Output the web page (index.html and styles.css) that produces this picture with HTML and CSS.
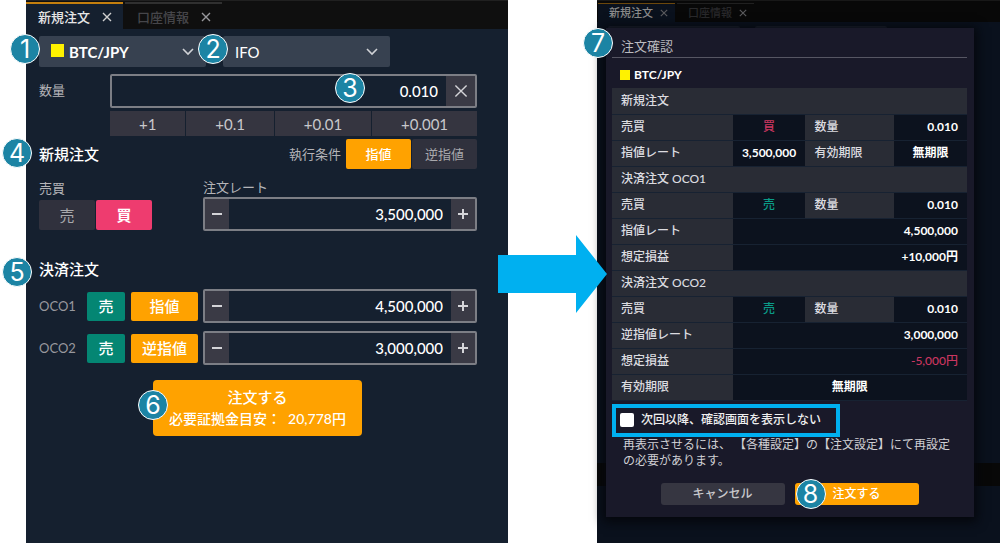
FILE: index.html
```html
<!DOCTYPE html>
<html lang="ja">
<head>
    <meta charset="UTF-8" />
    <meta name="viewport" content="width=device-width, initial-scale=1" />
    <title>IFO注文</title>
    <link rel="stylesheet" href="styles.css">
</head>
<body>
    <!-- ORDER ENTRY -->
    <main class="panel">
        <nav class="tabs">
            <div class="tab active"><button type="button">新規注文</button><button type="button" aria-label="新規注文を閉じる"><svg class="close" viewBox="0 0 10 10"><path d="M1 1l8 8M9 1l-8 8" /></svg></button></div>
            <div class="tab"><button type="button">口座情報</button><button type="button" aria-label="口座情報を閉じる"><svg class="close" viewBox="0 0 10 10"><path d="M1 1l8 8M9 1l-8 8" /></svg></button></div>
        </nav>

        <form class="order">
            <div class="selects">
                <div class="select has-coin">
                    <span class="badge badge-left">1</span>
                    <span class="coin"></span>
                    <select aria-label="銘柄"><option>BTC/JPY</option></select>
                    <svg class="chevron" viewBox="0 0 12 8"><path d="M1 1l5 5 5-5" /></svg>
                </div>
                <div class="select">
                    <span class="badge badge-between">2</span>
                    <select aria-label="注文種別"><option>IFO</option></select>
                    <svg class="chevron" viewBox="0 0 12 8"><path d="M1 1l5 5 5-5" /></svg>
                </div>
            </div>

            <div class="quantity">
                <label for="qty">数量</label>
                <div class="quantity-fields">
                    <div class="field field-qty">
                        <span class="badge badge-qty">3</span>
                        <input type="text" id="qty" value="0.010" />
                        <button type="button" class="clear" aria-label="クリア"><svg class="close" viewBox="0 0 10 10"><path d="M1 1l8 8M9 1l-8 8" /></svg></button>
                    </div>
                    <div class="quick">
                        <button type="button">+1</button>
                        <button type="button">+0.1</button>
                        <button type="button">+0.01</button>
                        <button type="button">+0.001</button>
                    </div>
                </div>
            </div>

            <div class="entry-head">
                <span class="badge badge-section">4</span>
                <h2>新規注文</h2>
                <span class="caption">執行条件</span>
                <div class="toggle toggle-type">
                    <button type="button" class="orange">指値</button>
                    <button type="button">逆指値</button>
                </div>
            </div>

            <div class="entry">
                <div class="side">
                    <span class="caption">売買</span>
                    <div class="toggle">
                        <button type="button">売</button>
                        <button type="button" class="pink">買</button>
                    </div>
                </div>
                <div class="rate">
                    <label for="rate">注文レート</label>
                    <div class="field">
                        <button type="button" aria-label="減らす"><svg class="sign" viewBox="0 0 12 12"><path d="M1 6h10" /></svg></button>
                        <input type="text" id="rate" value="3,500,000" />
                        <button type="button" aria-label="増やす"><svg class="sign" viewBox="0 0 12 12"><path d="M1 6h10M6 1v10" /></svg></button>
                    </div>
                </div>
            </div>

            <div class="settle-head">
                <span class="badge badge-section">5</span>
                <h2>決済注文</h2>
            </div>
            <div class="oco">
                <label for="oco1">OCO1</label>
                <button type="button" class="tag green">売</button>
                <button type="button" class="tag orange">指値</button>
                <div class="field">
                    <button type="button" aria-label="減らす"><svg class="sign" viewBox="0 0 12 12"><path d="M1 6h10" /></svg></button>
                    <input type="text" id="oco1" value="4,500,000" />
                    <button type="button" aria-label="増やす"><svg class="sign" viewBox="0 0 12 12"><path d="M1 6h10M6 1v10" /></svg></button>
                </div>
            </div>
            <div class="oco">
                <label for="oco2">OCO2</label>
                <button type="button" class="tag green">売</button>
                <button type="button" class="tag orange">逆指値</button>
                <div class="field">
                    <button type="button" aria-label="減らす"><svg class="sign" viewBox="0 0 12 12"><path d="M1 6h10" /></svg></button>
                    <input type="text" id="oco2" value="3,000,000" />
                    <button type="button" aria-label="増やす"><svg class="sign" viewBox="0 0 12 12"><path d="M1 6h10M6 1v10" /></svg></button>
                </div>
            </div>

            <div class="submit-row">
                <span class="badge badge-submit">6</span>
                <button type="submit" class="submit orange">注文する<small>必要証拠金目安：&nbsp; 20,778円</small></button>
            </div>
        </form>
    </main>

    <svg class="arrow" viewBox="0 0 109 78" preserveAspectRatio="none"><path d="M0 20h78V0l31 39-31 39V58H0z" /></svg>

    <!-- CONFIRMATION -->
    <section class="panel panel-dim">
        <nav class="tabs">
            <div class="tab active"><button type="button">新規注文</button><button type="button" aria-label="新規注文を閉じる"><svg class="close" viewBox="0 0 10 10"><path d="M1 1l8 8M9 1l-8 8" /></svg></button></div>
            <div class="tab"><button type="button">口座情報</button><button type="button" aria-label="口座情報を閉じる"><svg class="close" viewBox="0 0 10 10"><path d="M1 1l8 8M9 1l-8 8" /></svg></button></div>
        </nav>
        <div class="behind"><span></span><span></span></div>
        <div class="strip"></div>

        <div class="dialog" role="dialog" aria-labelledby="confirm-title">
            <span class="badge badge-dialog">7</span>
            <h2 id="confirm-title">注文確認</h2>
            <p class="pair"><span class="coin"></span>BTC/JPY</p>
            <table>
                <colgroup>
                    <col class="col-name"><col class="col-value"><col class="col-sub"><col class="col-value">
                </colgroup>
                <tr><th colspan="4">新規注文</th></tr>
                <tr><th>売買</th><td class="center buy">買</td><th>数量</th><td>0.010</td></tr>
                <tr><th>指値レート</th><td class="center">3,500,000</td><th>有効期限</th><td class="center">無期限</td></tr>
                <tr><th colspan="4">決済注文 OCO1</th></tr>
                <tr><th>売買</th><td class="center sell">売</td><th>数量</th><td>0.010</td></tr>
                <tr><th>指値レート</th><td colspan="3">4,500,000</td></tr>
                <tr><th>想定損益</th><td colspan="3">+10,000円</td></tr>
                <tr><th colspan="4">決済注文 OCO2</th></tr>
                <tr><th>売買</th><td class="center sell">売</td><th>数量</th><td>0.010</td></tr>
                <tr><th>逆指値レート</th><td colspan="3">3,000,000</td></tr>
                <tr><th>想定損益</th><td colspan="3" class="loss">-5,000円</td></tr>
                <tr><th>有効期限</th><td colspan="3" class="center">無期限</td></tr>
            </table>
            <label class="skip"><input type="checkbox" />次回以降、確認画面を表示しない</label>
            <p class="note">再表示させるには、 【各種設定】の【注文設定】にて再設定の必要があります。</p>
            <div class="actions">
                <button type="button">キャンセル</button>
                <button type="submit" class="orange"><span class="badge badge-confirm">8</span>注文する</button>
            </div>
        </div>
    </section>
</body>
</html>
```

FILE: styles.css
```css
* { box-sizing: border-box; }
body { margin: 0; padding-left: 26px; min-height: 100vh; display: grid; grid-template-columns: 482fr 89px 403fr; background: #fff; color: #fff; font-family: Lato, "Noto Sans CJK JP", sans-serif; font-size: 13px; line-height: 16px; }
h2, p { margin: 0; }
h2 { font-size: 15px; line-height: 20px; font-weight: 500; }
button, input, select { font: inherit; color: inherit; margin: 0; padding: 0; border: none; background: none; }
button { cursor: pointer; }
svg { display: block; fill: none; stroke: currentColor; }
label, .caption { color: #b4b4b8; }

.panel { position: relative; display: flex; flex-direction: column; min-width: 0; background: #15202f; }

/* tabs */
.tabs { display: flex; gap: 2px; height: 29px; padding-top: 1px; background: #0f0f0f; border-top: 1px solid #202020; }
.tab { display: flex; align-items: center; gap: 12px; padding: 0 11px 0 12px; border-top: 2px solid #303030; color: #46464a; font-weight: 500; }
.tab.active { background: #15202f; border-top-color: #c47f0e; color: #e6e6e6; }
.close { width: 10px; height: 10px; stroke-width: 1.4; color: #98989c; }
.active .close { color: #d0d0d0; }

/* numbered markers */
.badge { position: absolute; z-index: 2; width: 30px; height: 30px; border: 1px solid #fff; border-radius: 50%; background: #1c84a4; color: #fff; font-family: Inter, sans-serif; font-size: 25px; line-height: 28px; font-weight: 400; text-align: center; }
.badge-left { left: -29px; top: -2px; }
.badge-between { left: -25px; top: -2px; }
.badge-qty { right: 110px; top: -3px; }
.badge-section { left: -37px; top: -1px; }
.badge-submit { left: -15px; top: 10px; }
.badge-dialog { left: -23px; top: 0; }
.badge-confirm { left: 1px; top: -4px; }

/* order form */
.order { padding: 7px 31px 20px 13px; }
.selects { display: flex; gap: 17px; margin-right: 87px; }
.select { position: relative; flex: 1; height: 31px; background: #374150; border-radius: 2px; }
.select select { width: 100%; height: 100%; padding-left: 12px; appearance: none; font-size: 15px; }
.select option { background: #374150; }
.has-coin select { padding-left: 30px; font-weight: 700; }
.coin { width: 13px; height: 13px; background: #fff200; }
.select .coin { position: absolute; left: 12px; top: 8px; }
.chevron { position: absolute; right: 12px; top: 12px; width: 12px; height: 8px; stroke-width: 1.6; color: #d0d2d6; pointer-events: none; }

.field { display: flex; height: 34px; border: 2px solid #7c7e85; border-radius: 2px; background: #15202f; }
.field input { flex: 1; min-width: 0; padding-right: 8px; text-align: right; font-size: 15px; font-weight: 500; }
.field button { display: grid; place-items: center; width: 24px; background: #3a3a45; color: #d4d4d8; }
.sign { width: 12px; height: 12px; stroke-width: 2; }
.field .clear { width: 29px; }
.clear .close { width: 14px; height: 14px; stroke-width: 1; color: #d4d4d8; }

.quantity { display: flex; margin-top: 7px; }
.quantity > label { width: 71px; padding-top: 8px; }
.quantity-fields { flex: 1; }
.field-qty { position: relative; }
.quick { display: flex; gap: 1px; margin-top: 3px; }
.quick button { flex: 1 1 auto; height: 25px; padding: 0 20px; background: #353540; color: #c8c8cc; font-size: 15px; }

.entry-head { position: relative; display: flex; align-items: center; margin-top: 3px; }
.entry-head h2 { flex: 1; }
.toggle { display: flex; gap: 1px; }
.toggle button { width: 56px; height: 30px; background: #30313d; color: #a8a8ac; font-size: 15px; border-radius: 2px; }
.toggle-type { margin-left: 5px; }
.toggle-type button { width: 65px; font-size: 13px; }

.entry { display: flex; justify-content: space-between; margin-top: 10px; }
.side { padding-top: 1px; }
.side .caption { display: block; margin-bottom: 4px; }
.rate { width: 274px; }
.rate label { display: block; margin-bottom: 2px; }

.settle-head { position: relative; margin-top: 28px; }
.settle-head .badge { top: -2px; }
.oco { display: flex; align-items: center; margin-top: 8px; }
.settle-head + .oco { margin-top: 10px; }
.oco label { width: 48px; color: #98989e; }
.oco .field { flex: 1; margin-left: 5px; }
.tag { width: 38px; height: 29px; border-radius: 2px; font-size: 15px; font-weight: 500; }
.tag + .tag { width: 67px; margin-left: 6px; }

.order .orange { background: #ffa200; color: #fff; font-weight: 500; }
.toggle .pink { background: #ee3c6f; color: #fff; font-weight: 700; }
.green { background: #048673; }

.submit-row { position: relative; width: 209px; margin: 15px auto 0 114px; }
.submit { width: 100%; height: 56px; border-radius: 4px; font-size: 15px; line-height: 22px; }
.submit small { display: block; font-size: 14px; white-space: nowrap; }

.arrow { z-index: 3; align-self: start; width: 109px; height: 78px; margin: 235px 0 0 -10px; fill: #00b0f0; stroke: none; }

/* dimmed panel */
.panel-dim { background: #0a111d; }
.panel-dim .tabs { height: 22px; padding: 2px 0 0 1px; background: #080808; border-top: 1px solid #181818; }
.panel-dim .tab { gap: 7px; padding: 0 7px 0 11px; font-size: 11px; border-top: 1px solid #202020; color: #29292b; }
.panel-dim .tab.active { background: #0a111d; border-color: #6b470c; color: #8b8b8b; }
.panel-dim .close { width: 8px; height: 8px; color: #5b5b5e; }
.behind { flex: 1; display: flex; gap: 15px; padding: 4px 113px 0 11px; }
.behind span { flex: 1; height: 25px; background: #1c2230; border-radius: 2px; }
.strip { height: 23px; margin-bottom: 57px; background: #080808; }

.dialog { position: absolute; left: 9px; right: 26px; top: 28px; padding: 8px 7px 12px 6px; background: #191929; box-shadow: 0 2px 10px 3px #05070c; font-size: 12px; }
.dialog h2 { padding: 0 9px 1px; border-bottom: 1px solid #565663; color: #bababf; font-size: 13px; font-weight: 400; }
.pair { display: flex; align-items: center; gap: 4px; height: 30px; padding: 4px 8px 0; font-weight: 700; }
.pair .coin { width: 10px; height: 10px; }
table { width: 100%; border-collapse: collapse; table-layout: fixed; }
.col-name { width: 34%; }
.col-sub { width: 25%; }
th, td { height: 26px; padding: 0 9px; border-bottom: 1px solid #172232; }
th { background: #292c35; color: #dcdce0; font-weight: 500; text-align: left; }
td { background: #0c121e; font-weight: 700; text-align: right; }
td.center { padding: 0; text-align: center; }
td.buy, td.loss { color: #cb3660; font-weight: 500; }
td.sell { color: #0a9c88; font-weight: 500; }
.skip { display: flex; align-items: center; gap: 7px; width: fit-content; height: 33px; margin-top: 3px; padding: 0 15px 0 4px; border: 4px solid #00b0f0; color: #eee; font-weight: 500; }
.skip input { appearance: none; width: 14px; height: 14px; background: #fff; border-radius: 2px; }
.skip input:checked { background: #ffa200; }
.note { padding: 0 10px 0 11px; color: #d0d0d4; }
.actions { display: flex; justify-content: center; gap: 10px; margin-top: 14px; }
.actions button { position: relative; width: 124px; height: 22px; border-radius: 3px; background: #363641; color: #c8c8cc; font-weight: 500; }
.actions .orange { background: #ffa200; color: #fff; }
```
